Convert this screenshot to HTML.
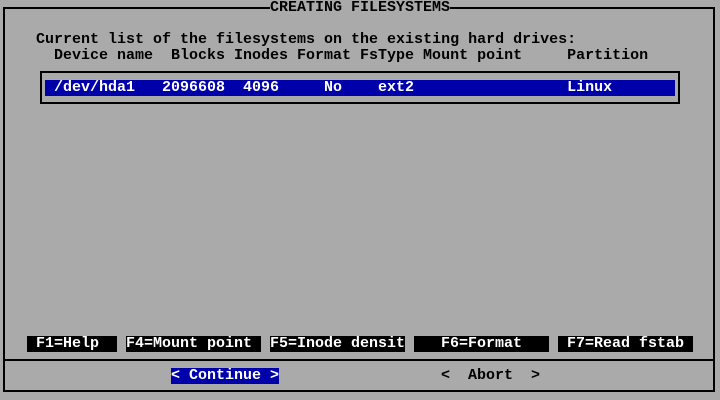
<!DOCTYPE html>
<html><head><style>
html,body{margin:0;padding:0;}
body{width:720px;height:400px;background:#aaaaaa;position:relative;overflow:hidden;font-family:"Liberation Mono",monospace;font-weight:bold;font-size:15px;}
.t{position:absolute;height:16px;line-height:16px;white-space:pre;color:#000;}
.l{position:absolute;background:#000;}
.k{background:#000;color:#fff;}
.b{background:#0000aa;color:#fff;}
</style></head><body>
<div class="l" style="left:3px;top:7px;width:712px;height:2px"></div>
<div class="l" style="left:3px;top:7px;width:2px;height:385px"></div>
<div class="l" style="left:713px;top:7px;width:2px;height:385px"></div>
<div class="l" style="left:3px;top:390px;width:712px;height:2px"></div>
<div class="l" style="left:5px;top:359px;width:708px;height:2px"></div>
<div class="t" style="left:270px;top:0;background:#aaaaaa">CREATING FILESYSTEMS</div>
<div class="t" style="left:36px;top:32px">Current list of the filesystems on the existing hard drives:</div>
<div class="t" style="left:54px;top:48px">Device name  Blocks Inodes Format FsType Mount point     Partition</div>
<div class="l" style="left:40px;top:71px;width:640px;height:2px"></div>
<div class="l" style="left:40px;top:71px;width:2px;height:33px"></div>
<div class="l" style="left:678px;top:71px;width:2px;height:33px"></div>
<div class="l" style="left:40px;top:102px;width:640px;height:2px"></div>
<div class="t b" style="left:45px;top:80px;width:630px"> /dev/hda1   2096608  4096     No    ext2                 Linux</div>
<div class="t k" style="left:27px;top:336px;width:90px"> F1=Help</div>
<div class="t k" style="left:126px;top:336px;width:135px">F4=Mount point</div>
<div class="t k" style="left:270px;top:336px;width:135px">F5=Inode densit</div>
<div class="t k" style="left:414px;top:336px;width:135px">   F6=Format</div>
<div class="t k" style="left:558px;top:336px;width:135px"> F7=Read fstab</div>
<div class="t b" style="left:171px;top:368px;width:108px">&lt; Continue &gt;</div>
<div class="t" style="left:441px;top:368px">&lt;  Abort  &gt;</div>
</body></html>
